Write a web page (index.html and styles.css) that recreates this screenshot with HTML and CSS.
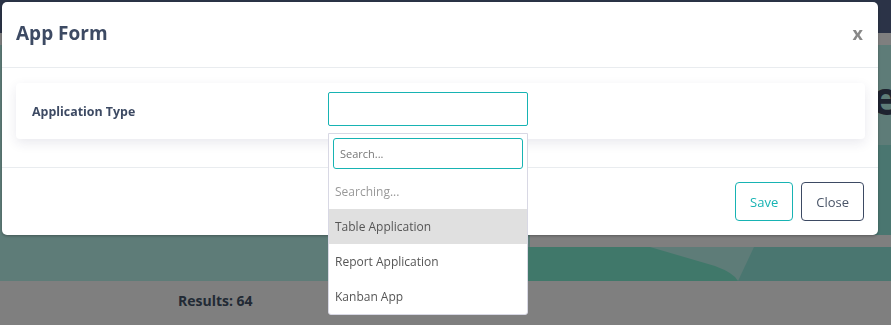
FILE: index.html
```html
<!DOCTYPE html>
<html lang="en">
<head>
    <meta charset="UTF-8">
    <meta name="viewport" content="width=device-width, initial-scale=1.0">
    <title>Apps</title>
    <link rel="stylesheet" href="styles.css">
</head>

<body>

<div class="navbar"></div>

<div class="hero">
    <h1 class="hero-title">Application Store</h1>
</div>

<div class="results">Results: 64</div>

<div class="backdrop"></div>

<div class="modal">
    <div class="modal-header">
        <h2 class="modal-title">App Form</h2>
        <button class="modal-close">x</button>
    </div>

    <div class="modal-body">
        <div class="form-card">
            <label class="form-label">Application Type</label>
            <div class="select">
                <div class="select-box"></div>
                <div class="select-dropdown">
                    <div class="select-search">
                        <input type="text" placeholder="Search..." autofocus>
                    </div>
                    <div class="select-status">Searching...</div>
                    <ul class="select-options">
                        <li class="active">Table Application</li>
                        <li>Report Application</li>
                        <li>Kanban App</li>
                    </ul>
                </div>
            </div>
        </div>
    </div>

    <div class="modal-footer">
        <button class="btn btn-save">Save</button>
        <button class="btn btn-close">Close</button>
    </div>
</div>

</body>
</html>
```

FILE: styles.css
```css
* {
    box-sizing: border-box;
    margin: 0;
    padding: 0;
    font-family: "Open Sans", Arial, sans-serif;
}

body {
    background: #fff;
    overflow: hidden;
}

/* Page behind the modal */
.navbar {
    height: 33px;
    background: #56678e;
    margin-bottom: 12px;
}

.hero {
    height: 236px;
    overflow: hidden;
    background: #bcf8f0 url("data:image/svg+xml,%3Csvg xmlns='http://www.w3.org/2000/svg' width='891' height='236'%3E%3Crect x='560' y='100' width='331' height='90' fill='%2394ece0'/%3E%3Crect x='530' y='190' width='361' height='12' fill='%23fff'/%3E%3Cpath d='M450 202 L650 202 L715 221 Q734 228 738 236 L450 236 Z' fill='%2380f0d4'/%3E%3Cpath d='M754 202 L891 202 L891 236 L738 236 Z' fill='%2394ece0'/%3E%3C/svg%3E") no-repeat;
}

.hero-title {
    text-align: right;
    font-size: 46px;
    font-weight: 700;
    color: #3c4660;
    white-space: nowrap;
    padding-top: 21px;
    margin-right: -8px;
}

.results {
    padding: 10px 0 0 178px;
    font-size: 14px;
    font-weight: 700;
    line-height: 20px;
    color: #44546a;
}

.backdrop {
    position: fixed;
    inset: 0;
    background: rgba(0, 0, 0, 0.5);
}

/* Modal */
.modal {
    position: fixed;
    top: 2px;
    left: 2px;
    width: 876px;
    background: #fff;
    border-radius: 5px;
    box-shadow: 0 1px 3px rgba(0, 0, 0, 0.3);
}

.modal-header {
    display: flex;
    justify-content: space-between;
    align-items: center;
    padding: 16px 15px 19px 14px;
    border-bottom: 1px solid #e9ecef;
}

.modal-title {
    font-size: 19px;
    line-height: 30px;
    font-weight: 700;
    color: #3d4a63;
}

.modal-close {
    background: none;
    border: none;
    font-size: 18px;
    font-weight: 700;
    color: #888;
    cursor: pointer;
}

.modal-body {
    padding: 15px 13px 28px 14px;
}

.form-card {
    display: flex;
    align-items: center;
    padding: 9px 16px 13px;
    border-radius: 4px;
    box-shadow: 0 4px 12px rgba(40, 40, 90, 0.1);
}

.form-label {
    flex: 0 0 296px;
    font-size: 12.4px;
    font-weight: 700;
    color: #3d4a63;
    padding-top: 4px;
}

/* Select with open dropdown */
.select {
    position: relative;
    width: 200px;
}

.select-box {
    height: 34px;
    border: 1px solid #17b3b3;
    border-radius: 2px;
}

.select-dropdown {
    position: absolute;
    top: 41px;
    left: 0;
    width: 200px;
    background: #fff;
    border: 1px solid #d8d8e4;
    border-radius: 0 0 3px 3px;
    z-index: 10;
}

.select-search {
    padding: 4px 4px 0;
}

.select-search input {
    width: 100%;
    height: 31px;
    border: 1px solid #17b3b3;
    border-radius: 3px;
    padding: 0 6px;
    font-size: 11px;
    color: #333;
    caret-color: #333;
    outline: none;
}

.select-search input::placeholder {
    color: #777;
}

.select-status {
    height: 40px;
    padding: 13px 6px 0;
    line-height: 20px;
    font-size: 12px;
    color: #999;
}

.select-options {
    list-style: none;
}

.select-options li {
    height: 35px;
    line-height: 35px;
    padding: 0 6px;
    font-size: 12px;
    color: #555;
    cursor: pointer;
}

.select-options li.active {
    background: #e0e0e0;
}

/* Footer */
.modal-footer {
    display: flex;
    justify-content: flex-end;
    gap: 8px;
    padding: 14px;
    border-top: 1px solid #e9ecef;
}

.btn {
    height: 39px;
    padding: 0 14px;
    font-size: 13px;
    background: #fff;
    border-radius: 4px;
    cursor: pointer;
}

.btn-save {
    border: 1px solid #17b3b3;
    color: #17b3b3;
}

.btn-close {
    border: 1px solid #3d4a63;
    color: #4a5568;
}
```
